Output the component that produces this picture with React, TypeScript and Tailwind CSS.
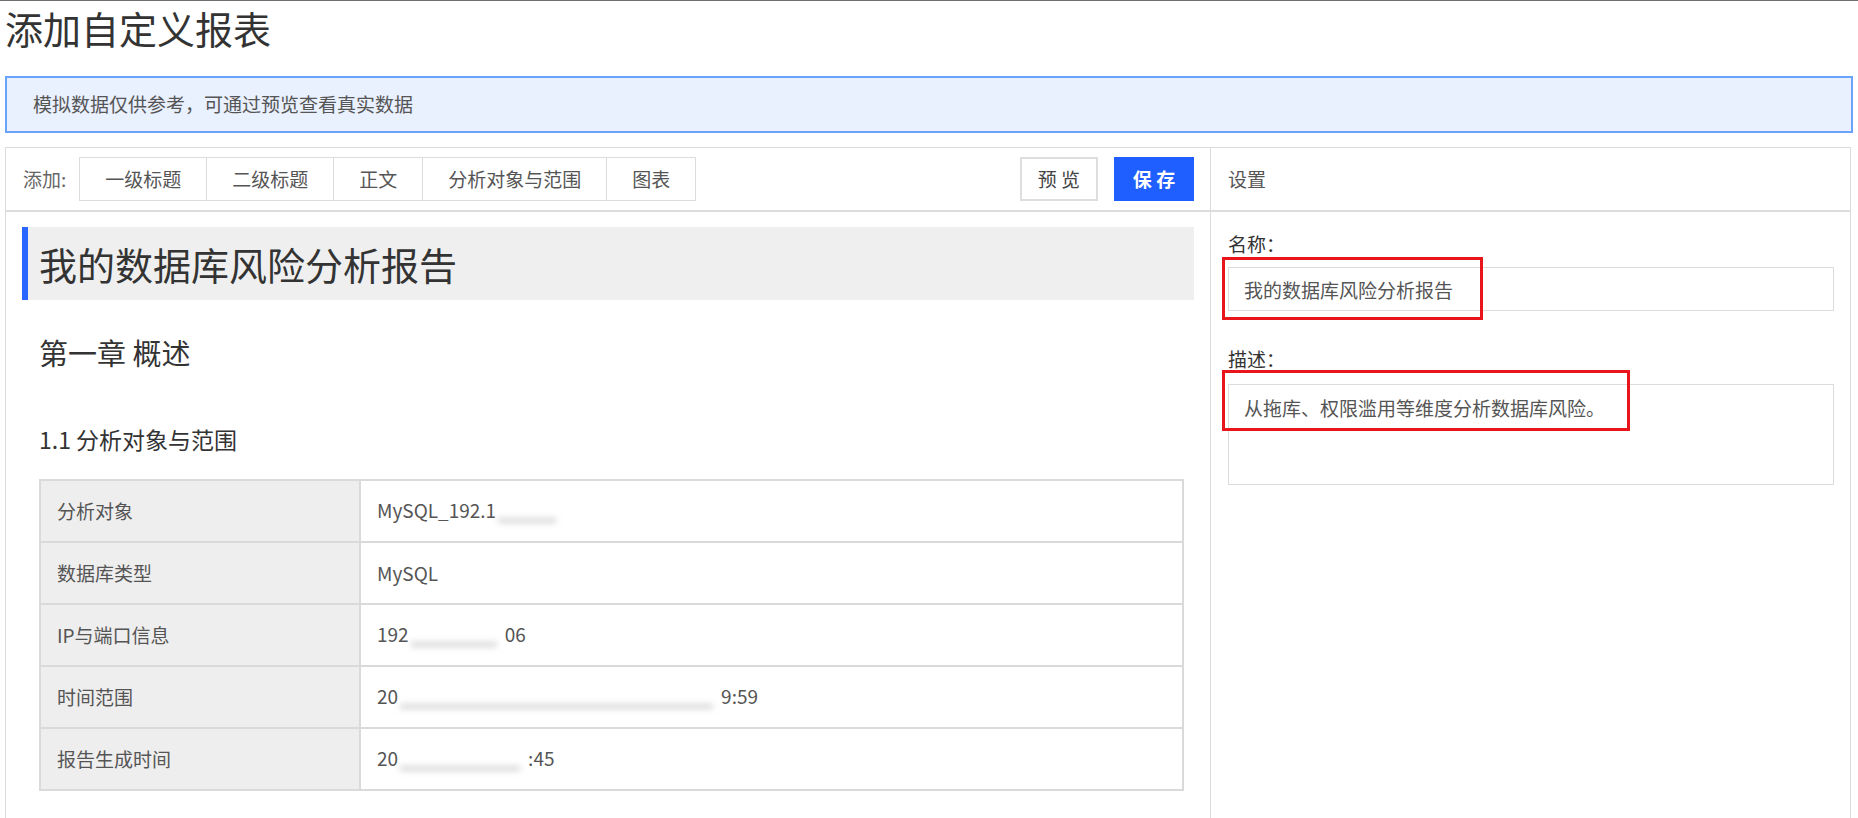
import React from "react";

const toolButtons = ["一级标题", "二级标题", "正文", "分析对象与范围", "图表"];

const Blur = ({ w }: { w: number }) => (
  <span
    className="relative inline-block h-[27px] align-middle bg-white"
    style={{ width: w }}
  >
    <span className="absolute left-[2px] right-[8px] bottom-[3px] h-[5px] bg-[#d6d6d6] blur-[3px]" />
  </span>
);

const rows: { label: string; value: React.ReactNode }[] = [
  {
    label: "分析对象",
    value: (
      <>
        MySQL_192.1
        <Blur w={68} />
      </>
    ),
  },
  { label: "数据库类型", value: "MySQL" },
  {
    label: "IP与端口信息",
    value: (
      <>
        192
        <Blur w={96} />
        06
      </>
    ),
  },
  {
    label: "时间范围",
    value: (
      <>
        20
        <Blur w={323} />
        9:59
      </>
    ),
  },
  {
    label: "报告生成时间",
    value: (
      <>
        20
        <Blur w={130} />
        :45
      </>
    ),
  },
];

const App = () => {
  return (
    <div className="min-h-screen bg-white border-t border-[#6f6f6f] font-['Noto_Sans_CJK_SC','Noto_Sans',sans-serif] text-[#333]">
      <h1 className="pl-[5px] text-[38px] leading-[54px] font-normal text-[#333]">
        添加自定义报表
      </h1>

      <div className="mx-[5px] mt-[21px] h-[57px] border-2 border-[#6aa3fb] bg-[#e9f0fe] pl-[26px] flex items-center text-[19px] text-[#555]">
        模拟数据仅供参考，可通过预览查看真实数据
      </div>

      <div className="ml-[5px] mt-[14px] w-[1846px] border border-[#dcdcdc] flex">
        {/* editor */}
        <div className="flex-1 flex flex-col">
          <div className="h-[64px] border-b-2 border-[#dcdcdc] flex items-center pl-[17px] pr-[16px]">
            <span className="text-[19px] text-[#666]">添加:</span>
            <div className="ml-[13px] flex border border-[#dcdcdc]">
              {toolButtons.map((b, i) => (
                <button
                  key={b}
                  className={
                    "h-[42px] px-[25px] text-[19px] text-[#555] bg-white " +
                    (i < toolButtons.length - 1 ? "border-r border-[#dcdcdc]" : "")
                  }
                >
                  {b}
                </button>
              ))}
            </div>
            <div className="ml-auto flex gap-[16px]">
              <button className="w-[78px] h-[44px] border-2 border-[#dedede] bg-white text-[19px] text-[#444]">
                预 览
              </button>
              <button className="w-[80px] h-[44px] bg-[#1f5eff] text-[19px] font-bold text-white">
                保 存
              </button>
            </div>
          </div>

          <div className="pl-[16px] pr-[16px] pt-[15px] pb-[40px]">
            <div className="h-[73px] bg-[#efefef] border-l-[6px] border-[#2b65ff] pl-[11px] flex items-center text-[38px] text-[#333]">
              我的数据库风险分析报告
            </div>

            <h2 className="mt-[32px] pl-[17px] text-[29px] leading-[40px] font-normal text-[#333]">
              第一章 概述
            </h2>

            <h3 className="mt-[50px] pl-[17px] text-[23px] leading-[34px] font-normal text-[#333]">
              1.1 分析对象与范围
            </h3>

            <table className="mt-[23px] ml-[17px] w-[1145px] border-collapse text-[19px] text-[#555]">
              <tbody>
                {rows.map((r) => (
                  <tr key={r.label} className="h-[62px]">
                    <td className="w-[320px] border-2 border-[#dadada] bg-[#eeeeee] pl-[16px]">
                      {r.label}
                    </td>
                    <td className="border-2 border-[#dadada] bg-white pl-[16px] whitespace-nowrap">
                      {r.value}
                    </td>
                  </tr>
                ))}
              </tbody>
            </table>
          </div>
        </div>

        {/* settings */}
        <div className="w-[640px] border-l border-[#dcdcdc] flex flex-col">
          <div className="h-[64px] border-b-2 border-[#dcdcdc] flex items-center pl-[17px] text-[19px] text-[#555]">
            设置
          </div>
          <div className="pl-[17px] pr-[16px] pt-[19px]">
            <div className="text-[19px] leading-[26px] text-[#333]">名称：</div>
            <div className="relative mt-[10px]">
              <input
                className="w-full h-[44px] border border-[#dcdcdc] pl-[15px] text-[19px] text-[#555] outline-none"
                defaultValue="我的数据库风险分析报告"
              />
              <div className="absolute -left-[6px] -top-[10px] w-[261px] h-[63px] border-[3px] border-[#e8151b] pointer-events-none" />
            </div>

            <div className="mt-[35px] text-[19px] leading-[26px] text-[#333]">描述：</div>
            <div className="relative mt-[12px]">
              <textarea
                className="block w-full h-[101px] border border-[#dcdcdc] pl-[15px] pt-[10px] text-[19px] leading-[26px] text-[#555] outline-none resize-none"
                defaultValue="从拖库、权限滥用等维度分析数据库风险。"
              />
              <div className="absolute -left-[6px] -top-[14px] w-[408px] h-[61px] border-[3px] border-[#e8151b] pointer-events-none" />
            </div>
          </div>
        </div>
      </div>
    </div>
  );
};

export default App;
